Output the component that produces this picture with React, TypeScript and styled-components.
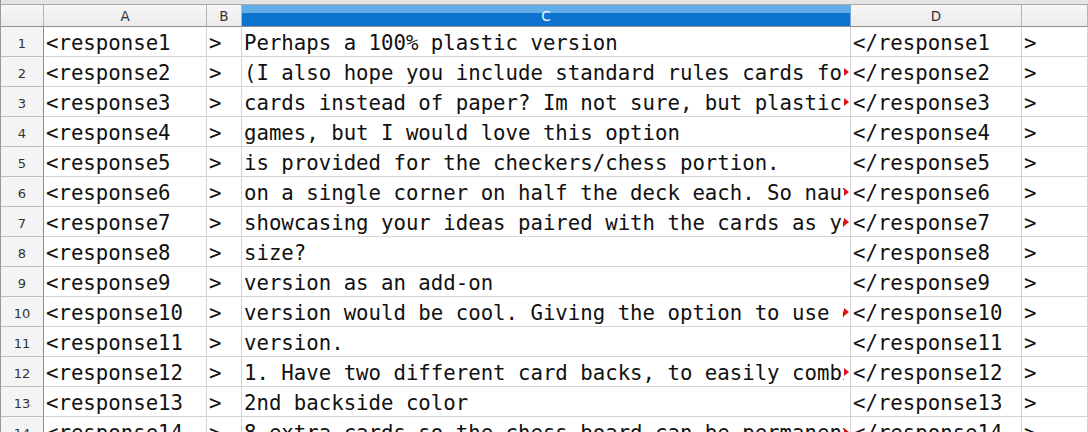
import React from "react";
import styled, { createGlobalStyle } from "styled-components";

const Global = createGlobalStyle`
  html, body { margin: 0; padding: 0; background: #ffffff; overflow: hidden; }
  #root { width: 1088px; height: 432px; overflow: hidden; }
`;

const COLS = "43px 163px 35px 609px 171px 1fr";

const Sheet = styled.div`
  width: 1088px;
  height: 432px;
  overflow: hidden;
  background: #ffffff;
  border-left: 1px solid #9a9a9a;
  box-sizing: border-box;
`;

const TopStrip = styled.div`
  height: 4px;
  background: #e4e4e4;
  border-bottom: 1px solid #a9a9a9;
`;

const HeaderRow = styled.div`
  display: grid;
  grid-template-columns: ${COLS};
  height: 22px;
`;

const HeadCell = styled.div<{ $active?: boolean }>`
  box-sizing: border-box;
  height: 22px;
  border-right: 1px solid ${(p) => (p.$active ? "#7aa9d6" : "#b5b5b5")};
  border-bottom: 1px solid #8e8e8e;
  background: ${(p) =>
    p.$active
      ? "linear-gradient(#62ade7 0, #62ade7 38%, #0c73cf 38%, #0c73cf 100%)"
      : "linear-gradient(#f6f6f6, #ececec)"};
  color: ${(p) => (p.$active ? "#f4f8ff" : "#333333")};
  font-family: "DejaVu Sans", "Noto Sans", sans-serif;
  font-size: 13.5px;
  display: flex;
  align-items: center;
  justify-content: center;
`;

const Row = styled.div`
  display: grid;
  grid-template-columns: ${COLS};
  height: 30px;
`;

const RowNum = styled.div`
  box-sizing: border-box;
  height: 30px;
  padding-top: 3px;
  border-right: 1px solid #8e8e8e;
  border-bottom: 1px solid #bdbdbd;
  background: #f4f4f4;
  color: #333;
  font-family: "DejaVu Sans", "Noto Sans", sans-serif;
  font-size: 13px;
  display: flex;
  align-items: center;
  justify-content: center;
`;

const Cell = styled.div`
  position: relative;
  box-sizing: border-box;
  height: 30px;
  border-right: 1px solid #d3d3d3;
  border-bottom: 1px solid #d3d3d3;
  padding-left: 2px;
  padding-top: 3px;
  font-family: "DejaVu Sans Mono", "Liberation Mono", monospace;
  font-size: 20.7px;
  line-height: 26px;
  color: #111111;
  white-space: pre;
  overflow: hidden;
`;

const Clip = styled.span`
  display: block;
  width: calc(100% - 6px);
  overflow: hidden;
`;

const Overflow = styled.span`
  position: absolute;
  right: 1px;
  top: 11px;
  width: 0;
  height: 0;
  border-left: 5px solid #e0101a;
  border-top: 4px solid transparent;
  border-bottom: 4px solid transparent;
`;

const texts = [
  "Perhaps a 100% plastic version",
  "(I also hope you include standard rules cards for each game)",
  "cards instead of paper? Im not sure, but plastic cards last longer",
  "games, but I would love this option",
  "is provided for the checkers/chess portion.",
  "on a single corner on half the deck each. So nautical themes",
  "showcasing your ideas paired with the cards as you go",
  "size?",
  "version as an add-on",
  "version would be cool. Giving the option to use either",
  "version.",
  "1. Have two different card backs, to easily combine decks",
  "2nd backside color",
  "8 extra cards so the chess board can be permanent",
];

const MAX_CHARS = 48;

export default function App() {
  return (
    <>
      <Global />
      <Sheet>
        <TopStrip />
        <HeaderRow>
          <HeadCell />
          <HeadCell>A</HeadCell>
          <HeadCell>B</HeadCell>
          <HeadCell $active>C</HeadCell>
          <HeadCell>D</HeadCell>
          <HeadCell />
        </HeaderRow>
        {texts.map((t, i) => (
          <Row key={i}>
            <RowNum>{i + 1}</RowNum>
            <Cell>{`<response${i + 1}`}</Cell>
            <Cell>{">"}</Cell>
            <Cell>
              <Clip>{t}</Clip>
              {t.length > MAX_CHARS && <Overflow />}
            </Cell>
            <Cell>{`</response${i + 1}`}</Cell>
            <Cell>{">"}</Cell>
          </Row>
        ))}
      </Sheet>
    </>
  );
}
